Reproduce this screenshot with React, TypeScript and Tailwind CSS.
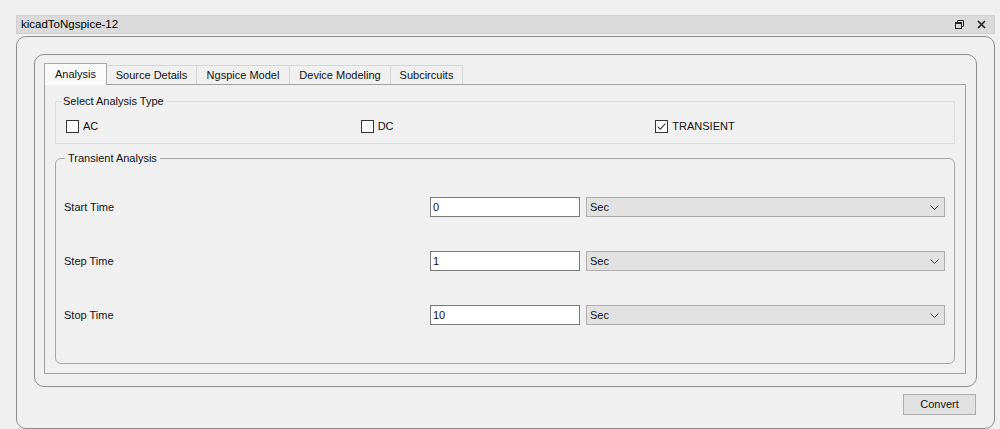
import React from "react";

const font = { fontFamily: '"Liberation Sans", Arial, sans-serif' };

function CheckBox({ label, checked }: { label: string; checked?: boolean }) {
  return (
    <div className="flex items-center gap-[4px] h-[13px]">
      <svg width="13" height="13" viewBox="0 0 13 13" className="shrink-0">
        <rect x="0.5" y="0.5" width="12" height="12" fill="#ffffff" stroke="#333333" />
        {checked && (
          <path d="M2.6 6.6 L5.2 9.2 L10.4 3.6" fill="none" stroke="#3a3a3a" strokeWidth="1.1" />
        )}
      </svg>
      <span className="text-[11px] leading-[13px] text-[#111]">{label}</span>
    </div>
  );
}

function Row({ label, value }: { label: string; value: string }) {
  return (
    <div className="flex items-center h-[54px]">
      <div className="w-[366px] text-[11px] text-[#111]">{label}</div>
      <div className="w-[150px] h-[20px] border border-[#7a7a7a] bg-white flex items-center pl-[2px] text-[11px] text-[#111]">
        {value}
      </div>
      <div className="ml-[6px] flex-1 h-[20px] border border-[#adadad] bg-[#e1e1e1] flex items-center justify-between pl-[3px] pr-[5px] text-[11px] text-[#111]">
        <span>Sec</span>
        <svg width="9" height="5" viewBox="0 0 9 5">
          <path d="M0.5 0.5 L4.5 4.5 L8.5 0.5" fill="none" stroke="#404040" strokeWidth="1" />
        </svg>
      </div>
    </div>
  );
}

export default function App() {
  const tabs = [
    { name: "Source Details", w: "w-[90px]" },
    { name: "Ngspice Model", w: "w-[93px]" },
    { name: "Device Modeling", w: "w-[101px]" },
    { name: "Subcircuits", w: "w-[72px]" },
  ];
  return (
    <div className="w-[1000px] h-[429px] overflow-hidden bg-[#f0f0f0] pt-[15px] pl-[16px]" style={font}>
      {/* title bar */}
      <div className="w-[979px] h-[19px] bg-[#dadada] border border-[#cfcfcf] flex items-center justify-between pl-[4px] pr-[8px]">
        <span className="text-[11.5px] text-black">kicadToNgspice-12</span>
        <div className="flex items-center gap-[13px]">
          <svg width="9" height="9" viewBox="0 0 9 9">
            <path d="M2.5 2.5 V0.5 H8.5 V6.5 H6.5" fill="none" stroke="#222" strokeWidth="1" />
            <rect x="0.5" y="2.5" width="6" height="6" fill="none" stroke="#222" strokeWidth="1" />
            <line x1="0.5" y1="3.5" x2="6.5" y2="3.5" stroke="#222" strokeWidth="1" />
          </svg>
          <svg width="9" height="9" viewBox="0 0 9 9">
            <path d="M1 1 L8 8 M8 1 L1 8" fill="none" stroke="#222" strokeWidth="1.7" />
          </svg>
        </div>
      </div>

      {/* outer frame */}
      <div className="mt-[2px] w-[979px] h-[393px] border border-[#8c8c8c] rounded-[10px] pt-[17px] px-[17px] flex flex-col">
        {/* inner frame */}
        <div className="border border-[#8c8c8c] rounded-[10px] pt-[8px] pl-[9px] pr-[10px] pb-[12px]">
          {/* tabs */}
          <div className="flex items-end h-[21px]">
            <div className="relative z-10 w-[63px] h-[22px] -mb-px border border-b-0 border-[#a8a8a8] bg-[#fafafa] flex items-center justify-center text-[11px] text-[#111]">
              Analysis
            </div>
            {tabs.map((t) => (
              <div
                key={t.name}
                className={`${t.w} h-[19px] border-t border-r border-[#d6d6d6] bg-[#f0f0f0] flex items-center justify-center text-[11px] text-[#111]`}
              >
                {t.name}
              </div>
            ))}
          </div>
          {/* pane */}
          <div className="border border-[#a0a0a0] pt-[9px] px-[10px] pb-[9px]">
            <fieldset className="border border-[#dcdcdc] pl-[10px] pr-[4px] pt-[12px] pb-[10px]">
              <legend className="-ml-[4px] px-[1px] text-[11px] leading-[14px] text-[#111]">Select Analysis Type</legend>
              <div className="grid grid-cols-3">
                <CheckBox label="AC" />
                <CheckBox label="DC" />
                <CheckBox label="TRANSIENT" checked />
              </div>
            </fieldset>
            <fieldset className="mt-[7px] border border-[#a8a8a8] rounded-[6px] pl-[8px] pr-[9px] pt-[15px] pb-[21px]">
              <legend className="ml-[1px] px-[3px] text-[11px] leading-[14px] text-[#111]">Transient Analysis</legend>
              <Row label="Start Time" value="0" />
              <Row label="Step Time" value="1" />
              <Row label="Stop Time" value="10" />
            </fieldset>
          </div>
        </div>
        {/* convert */}
        <div className="mt-[7px] flex justify-end pr-[1px]">
          <button className="w-[73px] h-[21px] border border-[#adadad] bg-[#e1e1e1] text-[11px] text-[#111]">
            Convert
          </button>
        </div>
      </div>
    </div>
  );
}
